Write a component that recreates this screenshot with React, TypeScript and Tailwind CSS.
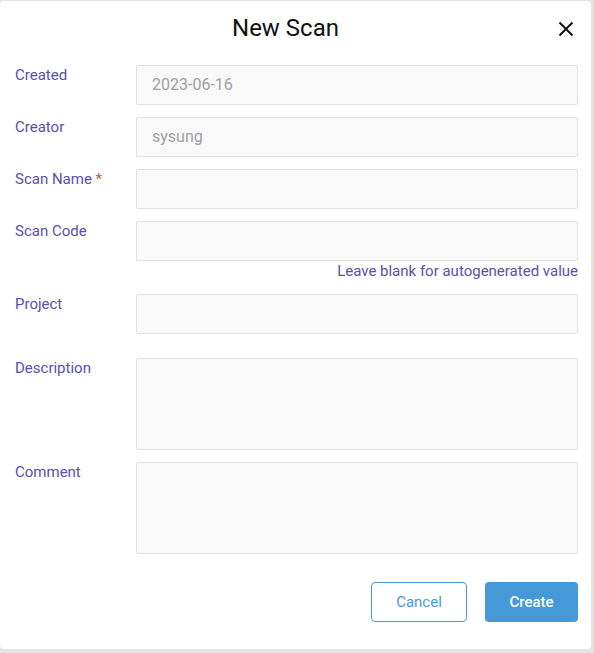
import React from "react";

const labelCls = "w-[121px] shrink-0 text-[15px] leading-[20px] text-[#5a50ae]";
const boxCls = "w-full bg-[#f9f9f9] border border-[#e2e2e2] rounded-[2px] px-[15px] text-[16px] text-[#a0a0a0] flex items-center";

function Row({ label, children, required }: { label: string; children: React.ReactNode; required?: boolean }) {
  return (
    <div className="flex items-start">
      <div className={labelCls}>
        {label}
        {required && <span className="text-[#c9573f]"> *</span>}
      </div>
      <div className="flex-1 flex flex-col">{children}</div>
    </div>
  );
}

export default function App() {
  return (
    <div className="w-[594px] h-[653px] bg-[#e3e3e3] pt-[1px] overflow-hidden" style={{ fontFamily: "Roboto, 'Liberation Sans', sans-serif" }}>
      <div className="w-[591px] h-[648px] bg-white rounded-[4px] flex flex-col pl-[15px] pr-[13px]">
        <div className="relative h-[54px] flex items-center justify-center pr-[22px]">
          <div className="text-[24px] text-[#111]">New Scan</div>
          <svg className="absolute right-[4px] top-[20px]" width="16" height="16" viewBox="0 0 16 16">
            <path d="M1.5 1.5 L14.5 14.5 M14.5 1.5 L1.5 14.5" stroke="#111" strokeWidth="2" />
          </svg>
        </div>
        <div className="flex flex-col mt-[10px]">
          <Row label="Created">
            <div className={boxCls + " h-[40px]"}>2023-06-16</div>
          </Row>
          <div className="h-[12px]" />
          <Row label="Creator">
            <div className={boxCls + " h-[40px]"}>sysung</div>
          </Row>
          <div className="h-[12px]" />
          <Row label="Scan Name" required>
            <div className={boxCls + " h-[40px]"}></div>
          </Row>
          <div className="h-[12px]" />
          <Row label="Scan Code">
            <div className={boxCls + " h-[40px]"}></div>
            <div className="text-right text-[15px] leading-[20px] text-[#5a50ae]">Leave blank for autogenerated value</div>
          </Row>
          <div className="h-[13px]" />
          <Row label="Project">
            <div className={boxCls + " h-[40px]"}></div>
          </Row>
          <div className="h-[24px]" />
          <Row label="Description">
            <div className={boxCls + " h-[92px]"}></div>
          </Row>
          <div className="h-[12px]" />
          <Row label="Comment">
            <div className={boxCls + " h-[92px]"}></div>
          </Row>
        </div>
        <div className="flex justify-end gap-[18px] mt-[28px]">
          <button className="w-[96px] h-[40px] border border-[#4a9bd9] rounded-[4px] text-[15px] text-[#4a9bd9] bg-white">Cancel</button>
          <button className="w-[93px] h-[40px] rounded-[4px] text-[15px] font-medium text-white bg-[#4599d8]">Create</button>
        </div>
      </div>
    </div>
  );
}
